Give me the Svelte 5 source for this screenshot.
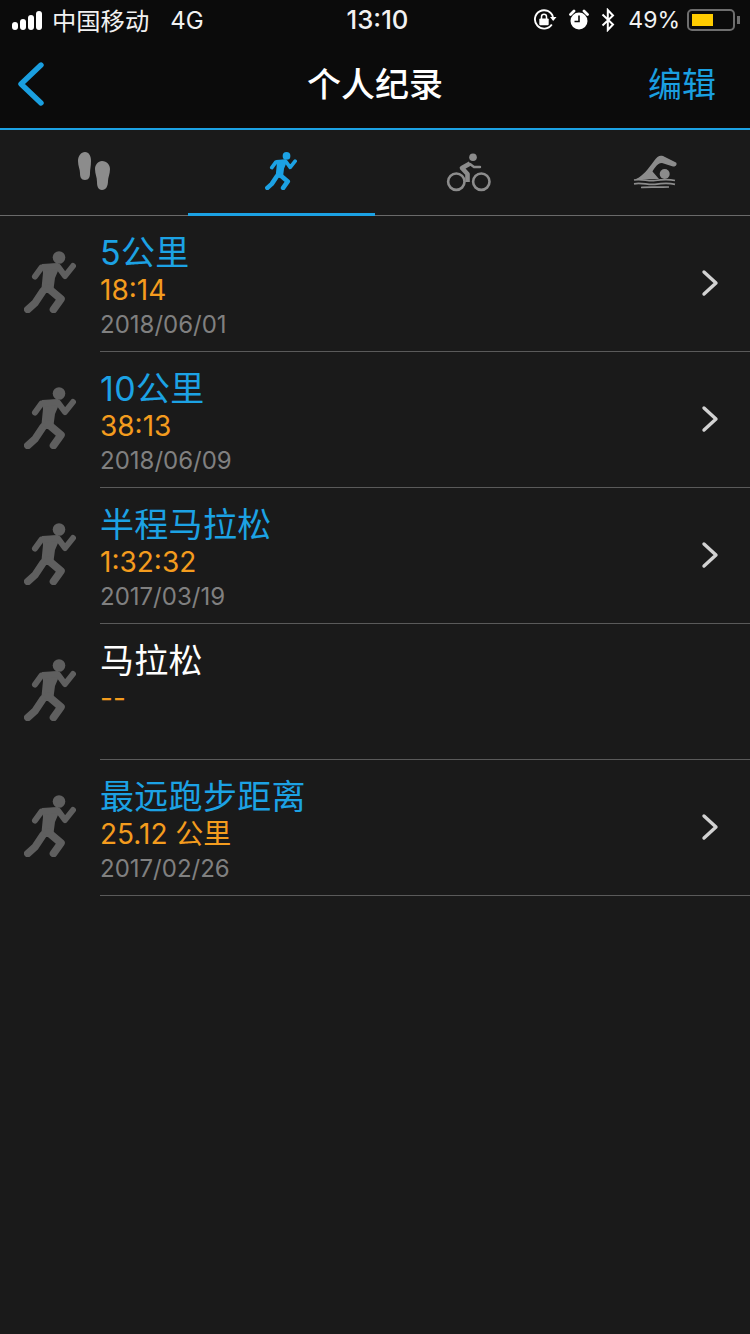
<script>
	const records = [
		{ title: '5公里', value: '18:14', date: '2018/06/01', done: true },
		{ title: '10公里', value: '38:13', date: '2018/06/09', done: true },
		{ title: '半程马拉松', value: '1:32:32', date: '2017/03/19', done: true },
		{ title: '马拉松', value: '--', date: '', done: false },
		{ title: '最远跑步距离', value: '25.12 公里', date: '2017/02/26', done: true }
	];
</script>

<svg class="defs" width="0" height="0" aria-hidden="true">
	<symbol id="runner" viewBox="0 0 52 62">
		<circle cx="35" cy="6.5" r="6.3" fill="currentColor" />
		<path d="M18 13 L34 12 L34 20 L31 27 L29 42 L17 42 L19 22 Z" fill="currentColor" />
		<g fill="none" stroke="currentColor" stroke-linecap="round" stroke-linejoin="round">
			<path d="M11 25.5 L17.5 16.5 L34 15.5 L41 25 L49 15" stroke-width="6" />
			<path d="M19 40 L11 52 L3.8 58.5" stroke-width="7.6" />
			<path d="M24 37 L37 48 L29.5 58.5" stroke-width="7.6" />
		</g>
	</symbol>
</svg>

<div class="page">
	<header class="top">
		<div class="status">
			<div class="status-left">
				<span class="signal"><i></i><i></i><i></i><i></i></span>
				<span class="carrier">中国移动</span>
				<span class="net">4G</span>
			</div>
			<div class="clock">13:10</div>
			<div class="status-right">
				<svg width="24" height="22" viewBox="0 0 24 22">
					<path d="M18.8 15.5 A9.2 9.2 0 1 1 20 8" fill="none" stroke="#fff" stroke-width="1.9" />
					<path d="M17 8 L23.5 8 L20.2 12 Z" fill="#fff" />
					<rect x="6.3" y="9.5" width="9.4" height="6.8" rx="1" fill="#fff" />
					<path d="M8.5 10 V7.7 a2.5 2.5 0 0 1 5 0 V10" fill="none" stroke="#fff" stroke-width="1.5" />
				</svg>
				<svg class="alarm" width="20" height="22" viewBox="0 0 20 22">
					<circle cx="10" cy="12" r="8.5" fill="#fff" />
					<path d="M10 6.5 V12.5 H5.5" fill="none" stroke="#0b0b0b" stroke-width="1.6" />
					<path d="M1.5 5.5 L5 2 M18.5 5.5 L15 2" stroke="#fff" stroke-width="2.8" stroke-linecap="round" />
				</svg>
				<svg class="bt" width="14" height="24" viewBox="0 0 14 24">
					<path d="M1.5 6.5 L12 16.5 L6.8 22 V2 L12 7.5 L1.5 17.5" fill="none" stroke="#fff" stroke-width="2" />
				</svg>
				<span class="pct">49%</span>
				<span class="battery"><span class="level"></span></span>
				<span class="nub"></span>
			</div>
		</div>
		<nav class="nav">
			<svg class="back" width="28" height="44" viewBox="0 0 28 44">
				<path d="M24 3 L4 22 L24 41" fill="none" stroke="#1a9fe0" stroke-width="5.4" stroke-linecap="round" stroke-linejoin="round" />
			</svg>
			<h1>个人纪录</h1>
			<span class="edit">编辑</span>
		</nav>
	</header>

	<div class="tabs">
		<div class="tab">
			<svg width="34" height="38" viewBox="0 0 34 38">
				<path d="M8 0 C12 0 14 4 14 9 C14 14 13 17 13 21 C13 25 12 28 8 28 C4 28 3 25 3 21 C3 17 1 14 1 9 C1 4 4 0 8 0 Z" fill="#8c8c8c" />
				<path d="M25 9 C30 9 33 13 33 17 C33 22 31 25 31 29 C31 34 29 38 25 38 C21 38 20 34 20 30 C20 25 18 22 18 17 C18 13 21 9 25 9 Z" fill="#8c8c8c" />
			</svg>
		</div>
		<div class="tab active">
			<svg class="run-tab" width="32" height="38"><use href="#runner" /></svg>
		</div>
		<div class="tab">
			<svg width="54" height="44" viewBox="0 0 54 44">
				<circle cx="14.3" cy="32.7" r="8.2" fill="none" stroke="#8c8c8c" stroke-width="2.6" />
				<circle cx="39.3" cy="32.7" r="8.2" fill="none" stroke="#8c8c8c" stroke-width="2.6" />
				<circle cx="31" cy="8.3" r="3.8" fill="#8c8c8c" />
				<path d="M28 14.5 L20 19 L25.5 25 V33" fill="none" stroke="#8c8c8c" stroke-width="4.6" stroke-linejoin="round" />
				<path d="M28 15 L32 18 H38" fill="none" stroke="#8c8c8c" stroke-width="2.4" stroke-linecap="round" />
			</svg>
		</div>
		<div class="tab">
			<svg width="54" height="42" viewBox="0 0 54 42">
				<path d="M7 29 C14 26 19 19 25 11 C28 6 31 5 34 6 L47 12.5 C48.5 14 47 17 44 16.5 L33 13 C30 13 28 15 26.5 17 C25 19 24 20 23.5 21.5 L30 29 Z" fill="#8c8c8c" />
				<circle cx="35.7" cy="24" r="5" fill="#8c8c8c" />
				<path d="M5 30 C13 28.5 19 31.5 26 30.5 C33 29.5 39 29 46 30.5 M5 33.8 C13 32.3 19 35.3 26 34.3 C33 33.3 39 32.8 46 34.3 M12 37.5 C18 36.5 33 37.5 40 37" fill="none" stroke="#8c8c8c" stroke-width="1.7" />
			</svg>
		</div>
	</div>

	<ul class="list">
		{#each records as r}
			<li class="row">
				<svg class="runner" width="52" height="62"><use href="#runner" /></svg>
				<div class="body">
					<div class="text">
						<div class="title" class:plain={!r.done}>{r.title}</div>
						<div class="value">{r.value}</div>
						<div class="date">{r.date}</div>
					</div>
					{#if r.done}
						<svg class="chev" width="18" height="28" viewBox="0 0 18 28">
							<path d="M3 3 L15 14 L3 25" fill="none" stroke="#d2d2d2" stroke-width="3.4" stroke-linecap="round" stroke-linejoin="round" />
						</svg>
					{/if}
				</div>
			</li>
		{/each}
	</ul>
</div>

<style>
	:global(body) {
		background: #1a1a1a;
	}

	.defs {
		position: absolute;
	}

	.page {
		width: 750px;
		height: 1334px;
		overflow: hidden;
		background: #1a1a1a;
		color: #fff;
		font-family: Inter, "Noto Sans CJK SC", sans-serif;
	}

	.top {
		height: 128px;
		background: #0b0b0b;
		border-bottom: 2px solid #1ca2e4;
	}

	.status {
		display: grid;
		grid-template-columns: 1fr auto 1fr;
		align-items: center;
		height: 40px;
		padding: 0 9px 0 12px;
		font-size: 24px;
		color: #f2f2f2;
	}

	.status-left {
		display: flex;
		align-items: center;
	}

	.signal {
		display: flex;
		align-items: flex-end;
		gap: 2px;
		margin-right: 8px;
	}

	.signal i {
		width: 6px;
		background: #fff;
		border-radius: 3px;
	}

	.signal i:nth-child(1) { height: 8px; }
	.signal i:nth-child(2) { height: 11px; }
	.signal i:nth-child(3) { height: 15px; }
	.signal i:nth-child(4) { height: 19px; }

	.carrier {
		margin: -2px 0 0 2px;
		font-size: 24.3px;
	}

	.net {
		margin-left: 21px;
	}

	.clock {
		margin: -2px 0 0 2px;
		font-size: 25.7px;
		font-weight: 500;
	}

	.status-right {
		display: flex;
		align-items: center;
		justify-content: flex-end;
	}

	.alarm {
		margin-left: 12px;
	}

	.bt {
		margin-left: 12px;
	}

	.pct {
		margin-left: 13px;
		font-size: 23px;
	}

	.battery {
		display: block;
		width: 48px;
		height: 22px;
		margin-left: 7px;
		padding: 3px;
		box-sizing: border-box;
		border: 2px solid #6e6e6e;
		border-radius: 5px;
	}

	.level {
		display: block;
		width: 21px;
		height: 100%;
		background: #ffcc00;
	}

	.nub {
		width: 3px;
		height: 8px;
		margin: 0 1px 0 2px;
		background: #6e6e6e;
	}

	.nav {
		position: relative;
		display: flex;
		align-items: center;
		justify-content: space-between;
		height: 88px;
		padding: 0 34px 4px 17px;
		box-sizing: border-box;
	}

	.back {
		margin-top: 4px;
	}

	.nav h1 {
		position: absolute;
		left: 0;
		right: 0;
		margin: 0;
		text-align: center;
		font-size: 34px;
		font-weight: 500;
	}

	.edit {
		font-size: 34px;
		color: #1a9fe0;
	}

	.tabs {
		display: flex;
		height: 85px;
		border-bottom: 1px solid #6a6a6a;
	}

	.tab {
		flex: 1;
		display: flex;
		align-items: center;
		justify-content: center;
		padding-bottom: 4px;
		box-sizing: border-box;
	}

	.tab.active {
		color: #1ca2e4;
		border-bottom: 3px solid #1ca2e4;
		margin-bottom: -1px;
	}

	.run-tab {
		margin-top: 2px;
	}

	.list {
		list-style: none;
		margin: 0;
		padding: 0;
	}

	.row {
		display: flex;
		height: 136px;
	}

	.runner {
		flex: none;
		margin: 35px 24px 0 24px;
		color: #5f5f5f;
	}

	.body {
		flex: 1;
		display: flex;
		align-items: center;
		justify-content: space-between;
		padding-right: 31px;
		border-bottom: 1px solid #5a5a5a;
	}

	.text {
		align-self: flex-start;
		padding-top: 17px;
	}

	.chev {
		margin-bottom: 2px;
	}

	.title {
		height: 40px;
		line-height: 40px;
		font-size: 34px;
		letter-spacing: 0.3px;
		color: #1ca2e4;
	}

	.title.plain {
		color: #fff;
	}

	.value {
		height: 34px;
		line-height: 34px;
		font-size: 28px;
		color: #f49c1e;
	}

	.date {
		height: 35px;
		line-height: 35px;
		font-size: 24px;
		color: #808080;
	}
</style>
